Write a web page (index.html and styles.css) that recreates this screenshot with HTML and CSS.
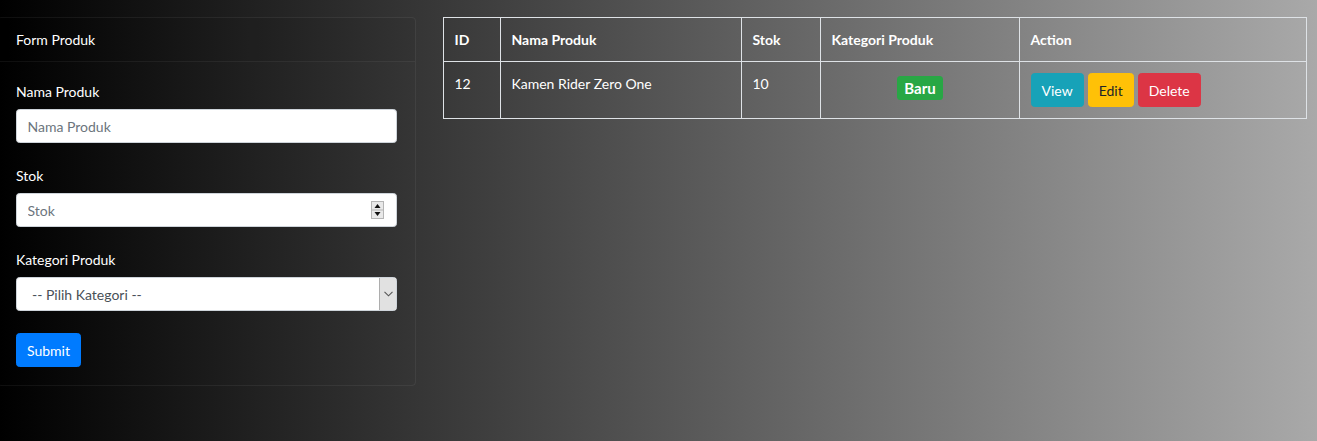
FILE: index.html
```html
<!DOCTYPE html>
<html lang="id">
<head>
<meta charset="utf-8">
<title>Produk</title>
<link rel="stylesheet" href="styles.css">
</head>
<body>
<div class="page">
  <div class="card">
    <div class="card-header">Form Produk</div>
    <div class="card-body">
      <div class="form-group">
        <label class="label">Nama Produk</label>
        <input class="form-control" type="text" placeholder="Nama Produk">
      </div>
      <div class="form-group">
        <label class="label">Stok</label>
        <div class="field">
          <input class="form-control no-spin" type="number" placeholder="Stok">
          <svg class="spinner" width="13" height="18" viewBox="0 0 13 18">
            <rect x="0.5" y="0.5" width="12" height="17" fill="#e9e9e9" stroke="#b5b5b5"/>
            <line x1="1" y1="9" x2="12" y2="9" stroke="#b5b5b5"/>
            <polygon points="6.5,3 9.5,7 3.5,7" fill="#111"/>
            <polygon points="3.5,11 9.5,11 6.5,15" fill="#111"/>
          </svg>
        </div>
      </div>
      <div class="form-group">
        <label class="label">Kategori Produk</label>
        <div class="field">
          <select class="form-control select">
            <option>-- Pilih Kategori --</option>
            <option>Baru</option>
            <option>Bekas</option>
          </select>
          <span class="select-btn">
            <svg width="9" height="6" viewBox="0 0 9 6"><polyline points="0.5,0.8 4.5,4.8 8.5,0.8" fill="none" stroke="#555" stroke-width="1.1"/></svg>
          </span>
        </div>
      </div>
      <button class="btn btn-primary">Submit</button>
    </div>
  </div>

  <table class="table">
    <colgroup>
      <col class="c-id">
      <col class="c-nama">
      <col class="c-stok">
      <col class="c-kat">
      <col>
    </colgroup>
    <thead>
      <tr>
        <th>ID</th>
        <th>Nama Produk</th>
        <th>Stok</th>
        <th>Kategori Produk</th>
        <th>Action</th>
      </tr>
    </thead>
    <tbody>
      <tr>
        <td>12</td>
        <td>Kamen Rider Zero One</td>
        <td>10</td>
        <td class="center"><span class="badge">Baru</span></td>
        <td class="actions">
          <button class="btn btn-info">View</button>
          <button class="btn btn-warning">Edit</button>
          <button class="btn btn-danger">Delete</button>
        </td>
      </tr>
    </tbody>
  </table>
</div>
</body>
</html>
```

FILE: styles.css
```css
* { box-sizing: border-box; }

html, body { height: 100%; }

body {
  margin: 0;
  font-family: Lato, "Open Sans", sans-serif;
  font-size: 14px;
  line-height: 21px;
  color: #fff;
  background: linear-gradient(to right, #000000, #a9a9a9);
}

.page {
  display: flex;
  align-items: flex-start;
  gap: 27px;
  padding: 17px 10px 0 0;
}

.card {
  width: 419px;
  margin-left: -3px;
  flex: none;
  border: 1px solid rgba(255, 255, 255, 0.06);
  border-radius: 4px;
}

.card-header {
  padding: 11px 18px;
  background: rgba(0, 0, 0, 0.03);
  border-bottom: 1px solid rgba(255, 255, 255, 0.06);
}

.card-body {
  padding: 19px 18px 18px 18px;
}

.form-group { margin-bottom: 22px; }

.label {
  display: block;
  margin-bottom: 7px;
}

.field { position: relative; }

.form-control {
  display: block;
  width: 100%;
  height: 34px;
  padding: 6px 10.5px;
  font: inherit;
  color: #495057;
  background: #fff;
  border: 1px solid #ced4da;
  border-radius: 3.5px;
  outline: none;
}

.form-control::placeholder { color: #6c757d; }

.no-spin { -moz-appearance: textfield; }
.no-spin::-webkit-outer-spin-button,
.no-spin::-webkit-inner-spin-button { -webkit-appearance: none; margin: 0; }

.spinner {
  position: absolute;
  top: 8px;
  right: 13px;
}

.select {
  -webkit-appearance: none;
  appearance: none;
  padding-left: 15px;
  background: #fff;
}

.select-btn {
  position: absolute;
  top: 1px;
  right: 1px;
  width: 17px;
  height: 32px;
  background: #e1e1e1;
  border-left: 1px solid #adadad;
  display: flex;
  align-items: center;
  justify-content: center;
}

.btn {
  display: inline-block;
  height: 34px;
  padding: 6px 10px;
  font: inherit;
  line-height: 21px;
  border: 1px solid transparent;
  border-radius: 3.5px;
  color: #fff;
  cursor: pointer;
  vertical-align: middle;
}

.btn-primary { background: #007bff; border-color: #007bff; }
.btn-info { background: #17a2b8; border-color: #17a2b8; }
.btn-warning { background: #ffc107; border-color: #ffc107; color: #212529; }
.btn-danger { background: #dc3545; border-color: #dc3545; }

.table {
  flex: 1;
  border-collapse: collapse;
  table-layout: fixed;
  color: #fff;
}

.c-id { width: 57px; }
.c-nama { width: 241px; }
.c-stok { width: 79px; }
.c-kat { width: 199px; }

.table th,
.table td {
  border: 1px solid #dee2e6;
  padding: 11px 10.5px;
  text-align: left;
  vertical-align: top;
}

.table th { font-weight: 700; }

.table td.center { text-align: center; }

.badge {
  display: inline-block;
  margin-top: 3px;
  padding: 1px 7px;
  font-size: 15px;
  font-weight: 700;
  line-height: 22px;
  background: #28a745;
  border-radius: 3.5px;
  color: #fff;
}

.actions { font-size: 0; }
.actions .btn { font-size: 14px; margin-right: 4px; }
```
